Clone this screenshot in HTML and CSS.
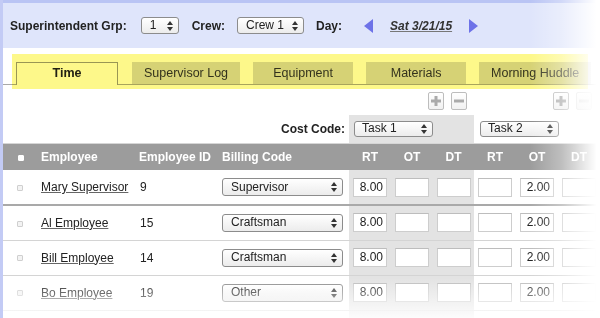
FILE: index.html
```html
<!DOCTYPE html>
<html lang="en">
<head>
	<meta charset="UTF-8">
	<title>Daily Time</title>
	<link rel="stylesheet" href="styles.css">
</head>
<body>
	<div class="page">
		<div class="topbar">
			<span class="lbl">Superintendent Grp:</span>
			<div class="sel sel-grp"><span>1</span><svg width="6" height="10" viewBox="0 0 6 10"><path d="M3 0L6 4H0Z M3 10L0 6H6Z" fill="#333"/></svg></div>
			<span class="lbl lbl-crew">Crew:</span>
			<div class="sel sel-crew"><span>Crew 1</span><svg width="6" height="10" viewBox="0 0 6 10"><path d="M3 0L6 4H0Z M3 10L0 6H6Z" fill="#333"/></svg></div>
			<span class="lbl lbl-day">Day:</span>
			<span class="arrow arrow-prev"></span>
			<a class="date">Sat 3/21/15</a>
			<span class="arrow arrow-next"></span>
		</div>

		<div class="tabbar">
			<div class="tab tab-active">Time</div>
			<div class="tab">Supervisor Log</div>
			<div class="tab">Equipment</div>
			<div class="tab">Materials</div>
			<div class="tab">Morning Huddle</div>
		</div>

		<table class="grid">
			<colgroup>
				<col class="c-chk"><col class="c-emp"><col class="c-id"><col class="c-bill">
				<col class="c-hr"><col class="c-hr"><col class="c-hr2">
				<col class="c-hr"><col class="c-hr"><col class="c-hr">
			</colgroup>
			<tr class="tools">
				<td colspan="4"></td>
				<td colspan="3" class="tools-1">
					<span class="tbtn"><svg width="10" height="10" viewBox="0 0 10 10"><path d="M3.5 0H6.5V3.5H10V6.5H6.5V10H3.5V6.5H0V3.5H3.5Z" fill="#aaa"/></svg></span><span class="tbtn"><svg width="10" height="10" viewBox="0 0 10 10"><path d="M0 3.5H10V6.5H0Z" fill="#aaa"/></svg></span>
				</td>
				<td colspan="3" class="tools-2">
					<span class="tbtn"><svg width="10" height="10" viewBox="0 0 10 10"><path d="M3.5 0H6.5V3.5H10V6.5H6.5V10H3.5V6.5H0V3.5H3.5Z" fill="#aaa"/></svg></span><span class="tbtn tbtn-off"><svg width="10" height="10" viewBox="0 0 10 10"><path d="M0 3.5H10V6.5H0Z" fill="#ddd"/></svg></span>
				</td>
			</tr>
			<tr class="cost">
				<td colspan="4" class="cost-lbl">Cost Code:</td>
				<td colspan="3" class="shade cost-1">
					<div class="sel sel-task"><span>Task 1</span><svg width="6" height="10" viewBox="0 0 6 10"><path d="M3 0L6 4H0Z M3 10L0 6H6Z" fill="#333"/></svg></div>
				</td>
				<td colspan="3" class="cost-2">
					<div class="sel sel-task"><span>Task 2</span><svg width="6" height="10" viewBox="0 0 6 10"><path d="M3 0L6 4H0Z M3 10L0 6H6Z" fill="#333"/></svg></div>
				</td>
			</tr>
			<tr class="head">
				<td class="chk"><span class="box box-head"></span></td>
				<td class="h-emp">Employee</td>
				<td class="h-id">Employee ID</td>
				<td class="h-bill">Billing Code</td>
				<td class="h-hr">RT</td><td class="h-hr">OT</td><td class="h-hr">DT</td>
				<td class="h-hr">RT</td><td class="h-hr">OT</td><td class="h-hr">DT</td>
			</tr>
			<tr class="row row-first">
				<td class="chk"><span class="box"></span></td>
				<td class="emp"><a>Mary Supervisor</a></td>
				<td class="id">9</td>
				<td class="bill"><div class="sel sel-bill"><span>Supervisor</span><svg width="6" height="10" viewBox="0 0 6 10"><path d="M3 0L6 4H0Z M3 10L0 6H6Z" fill="#333"/></svg></div></td>
				<td class="shade hr"><span class="inp">8.00</span></td>
				<td class="shade hr"><span class="inp"></span></td>
				<td class="shade hr"><span class="inp"></span></td>
				<td class="hr"><span class="inp"></span></td>
				<td class="hr"><span class="inp">2.00</span></td>
				<td class="hr"><span class="inp"></span></td>
			</tr>
			<tr class="row">
				<td class="chk"><span class="box"></span></td>
				<td class="emp"><a>Al Employee</a></td>
				<td class="id">15</td>
				<td class="bill"><div class="sel sel-bill"><span>Craftsman</span><svg width="6" height="10" viewBox="0 0 6 10"><path d="M3 0L6 4H0Z M3 10L0 6H6Z" fill="#333"/></svg></div></td>
				<td class="shade hr"><span class="inp">8.00</span></td>
				<td class="shade hr"><span class="inp"></span></td>
				<td class="shade hr"><span class="inp"></span></td>
				<td class="hr"><span class="inp"></span></td>
				<td class="hr"><span class="inp">2.00</span></td>
				<td class="hr"><span class="inp"></span></td>
			</tr>
			<tr class="row">
				<td class="chk"><span class="box"></span></td>
				<td class="emp"><a>Bill Employee</a></td>
				<td class="id">14</td>
				<td class="bill"><div class="sel sel-bill"><span>Craftsman</span><svg width="6" height="10" viewBox="0 0 6 10"><path d="M3 0L6 4H0Z M3 10L0 6H6Z" fill="#333"/></svg></div></td>
				<td class="shade hr"><span class="inp">8.00</span></td>
				<td class="shade hr"><span class="inp"></span></td>
				<td class="shade hr"><span class="inp"></span></td>
				<td class="hr"><span class="inp"></span></td>
				<td class="hr"><span class="inp">2.00</span></td>
				<td class="hr"><span class="inp"></span></td>
			</tr>
			<tr class="row">
				<td class="chk"><span class="box"></span></td>
				<td class="emp"><a>Bo Employee</a></td>
				<td class="id">19</td>
				<td class="bill"><div class="sel sel-bill"><span>Other</span><svg width="6" height="10" viewBox="0 0 6 10"><path d="M3 0L6 4H0Z M3 10L0 6H6Z" fill="#333"/></svg></div></td>
				<td class="shade hr"><span class="inp">8.00</span></td>
				<td class="shade hr"><span class="inp"></span></td>
				<td class="shade hr"><span class="inp"></span></td>
				<td class="hr"><span class="inp"></span></td>
				<td class="hr"><span class="inp">2.00</span></td>
				<td class="hr"><span class="inp"></span></td>
			</tr>
			<tr class="row row-last">
				<td class="chk"></td>
				<td class="emp"></td>
				<td class="id"></td>
				<td class="bill"><div class="sel sel-bill"></div></td>
				<td class="shade hr"><span class="inp"></span></td>
				<td class="shade hr"><span class="inp"></span></td>
				<td class="shade hr"><span class="inp"></span></td>
				<td class="hr"><span class="inp"></span></td>
				<td class="hr"><span class="inp"></span></td>
				<td class="hr"><span class="inp"></span></td>
			</tr>
		</table>

		<div class="highlight"></div>
		<div class="fade-right"></div>
		<div class="fade-bottom"></div>
	</div>
</body>
</html>
```

FILE: styles.css
```css
*{margin: 0;padding: 0;box-sizing: border-box;}
html,body{width: 600px;height: 318px;overflow: hidden;background-color: #fff;}
body{
	font-family: "Liberation Sans", Arial, sans-serif;
	font-size: 12px;
	color: #222;
}
.page{
	position: relative;
	height: 318px;
	overflow: hidden;
	border-left: 3px solid #c3cbf5;
}
/*top bar*/
.topbar{
	display: flex;
	align-items: center;
	height: 48px;
	padding-left: 7px;
	border-top: 3px solid #b9c4f4;
	background-color: #dfe5fb;
}
.lbl{font-weight: bold;}
.lbl-crew{margin-left: 13px;}
.lbl-day{margin-left: 12px;}
.sel{
	display: flex;
	align-items: center;
	justify-content: space-between;
	height: 17px;
	padding: 0 5px 0 8px;
	border: 1px solid #8c8c8c;
	border-radius: 3px;
	background: linear-gradient(#fff, #ececec);
	color: #222;
	line-height: 15px;
}
.sel-grp{width: 38px;margin-left: 14px;}
.sel-crew{width: 67px;margin-left: 12px;}
.arrow{
	width: 0;
	height: 0;
	border-top: 7px solid transparent;
	border-bottom: 7px solid transparent;
}
.arrow-prev{margin-left: 22px;border-right: 9px solid #6d72e8;}
.arrow-next{margin-left: 17px;border-left: 9px solid #6d72e8;}
.date{
	margin-left: 17px;
	font-weight: bold;
	font-style: italic;
	color: #333;
	text-decoration: underline;
	text-decoration-color: #777;
}
/*tabs*/
.tabbar{
	display: flex;
	align-items: flex-end;
	margin-top: 14px;
	padding-left: 13px;
	border-bottom: 1px solid #a9a9a9;
}
.tab{
	min-width: 100px;
	height: 22px;
	padding: 0 12px;
	margin-left: 13px;
	line-height: 22px;
	text-align: center;
	background-color: #d8d8d8;
	color: #333;
	font-size: 12.5px;
}
.tab-active{
	width: 102px;
	height: 23px;
	margin-left: 0;
	margin-right: 1px;
	margin-bottom: -1px;
	border: 1px solid #9a9a9a;
	border-bottom: none;
	background-color: #fff;
	font-weight: bold;
	color: #222;
	line-height: 21px;
}
.highlight{
	position: absolute;
	left: 9px;
	top: 54px;
	width: 576px;
	height: 35px;
	background-color: #fdf88a;
	mix-blend-mode: multiply;
	pointer-events: none;
}
/*grid*/
.grid{
	width: 597px;
	table-layout: fixed;
	border-collapse: collapse;
}
.grid td{padding: 0;white-space: nowrap;}
.c-chk{width: 32px;}
.c-emp{width: 100px;}
.c-id{width: 83px;}
.c-bill{width: 131px;}
.c-hr{width: 42px;}
.c-hr2{width: 41px;}
.tools td{height: 30px;vertical-align: top;padding-top: 7px;}
.tools-1{text-align: right;padding-right: 7px !important;}
.tools-2{text-align: right;padding-right: 8px !important;}
.tbtn{
	display: inline-flex;
	align-items: center;
	justify-content: center;
	width: 16px;
	height: 18px;
	margin-left: 7px;
	border: 1px solid #bdbdbd;
	border-radius: 2px;
	background: linear-gradient(#fff, #f1f1f1);
	vertical-align: top;
}
.tbtn-off{border-color: #e2e2e2;}
.cost td{height: 28px;}
.cost-lbl{text-align: right;padding-right: 4px !important;font-weight: bold;}
.shade{background-color: #e3e3e3;}
.cost-1{padding-left: 5px !important;}
.cost-2{padding-left: 6px !important;}
.sel-task{width: 79px;height: 16px;padding-left: 7px;}
.head td{
	height: 27px;
	background-color: #9c9c9c;
	border-top: 1px solid #d6d6d6;
	color: #fff;
	font-weight: bold;
}
.chk{padding-left: 14px !important;}
.box{
	display: inline-block;
	width: 6px;
	height: 6px;
	border: 1px solid #cfcfcf;
	border-radius: 1px;
	background-color: #f3f3f3;
	vertical-align: middle;
}
.box-head{margin-left: 1px;border-color: #fff;background-color: #fff;}
.h-emp{padding-left: 6px !important;}
.h-id{padding-left: 4px !important;}
.h-bill{padding-left: 4px !important;}
.h-hr{text-align: center;}
.row td{height: 35px;border-bottom: 1px solid #d4d4d4;}
.row-first td{border-bottom: 2px solid #a9a9a9;}
.emp{padding-left: 6px !important;}
.emp a{color: #222;text-decoration: underline;text-decoration-color: #666;}
.id{padding-left: 5px !important;}
.bill{padding-left: 4px !important;}
.sel-bill{width: 121px;height: 18px;}
.hr{text-align: center;}
.inp{
	display: inline-block;
	width: 34px;
	height: 19px;
	padding-right: 3px;
	border: 1px solid #cdcdcd;
	border-top-color: #bdbdbd;
	background-color: #fff;
	text-align: right;
	line-height: 17px;
	vertical-align: middle;
}
/*edge fades*/
.fade-right{
	position: absolute;
	top: 0;
	right: 0;
	width: 70px;
	height: 318px;
	background: linear-gradient(to right, rgba(255,255,255,0) 0%, rgba(255,255,255,0.35) 45%, #fff 95%);
	pointer-events: none;
}
.fade-bottom{
	position: absolute;
	left: -3px;
	right: 0;
	bottom: 0;
	height: 40px;
	background: linear-gradient(rgba(255,255,255,0), rgba(255,255,255,0.9));
	pointer-events: none;
}
```
